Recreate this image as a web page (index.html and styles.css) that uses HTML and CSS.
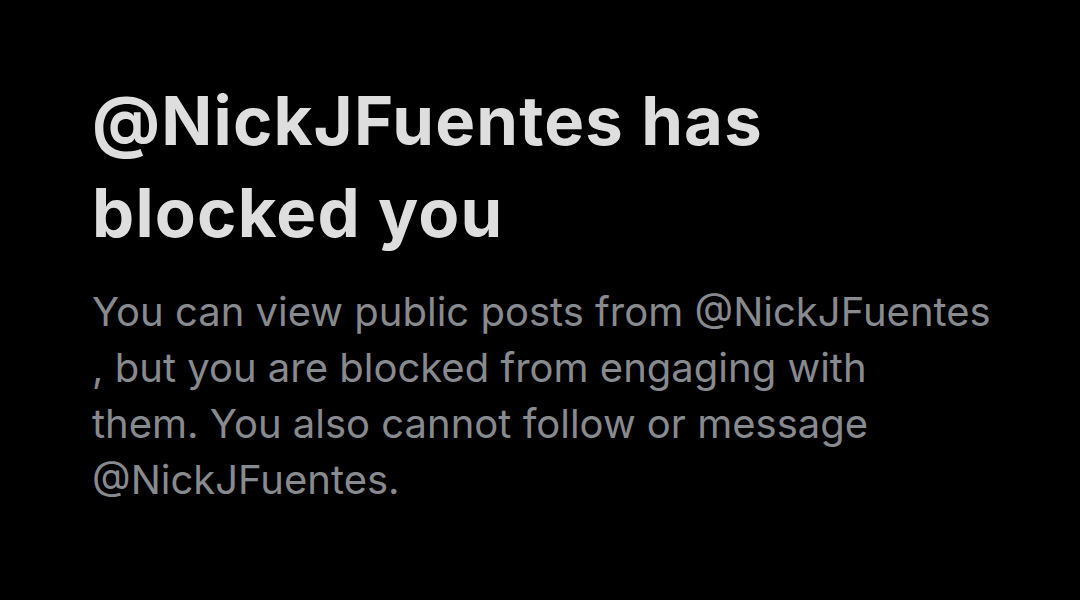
FILE: index.html
```html
<!DOCTYPE html>
<html lang="en">
<head>
    <meta charset="UTF-8">
    <meta name="viewport" content="width=device-width, initial-scale=1.0">
    <title>Blocked</title>
    <link rel="stylesheet" href="styles.css">
</head>
<body>
    <div class="container">
        <h1 class="title">@NickJFuentes has blocked you</h1>
        <p class="message">You can view public posts from <span class="mention">@NickJFuentes</span>, but you are blocked from engaging with<br>them. You also cannot follow or message <span class="mention">@NickJFuentes</span>.</p>
    </div>
</body>
</html>
```

FILE: styles.css
```css
body {
    margin: 0;
    padding: 0;
    background: #000;
    font-family: Inter, Roboto, "Liberation Sans", Arial, sans-serif;
    min-height: 100vh;
}

.container {
    padding: 75px 0 0 92px;
    width: 900px;
}

.title {
    margin: 0;
    font-size: 67px;
    line-height: 92px;
    font-weight: 700;
    color: #dedede;
    letter-spacing: 1.2px;
    width: 720px;
}

.message {
    margin: 25px 0 0;
    font-size: 40px;
    line-height: 56px;
    color: #878a8f;
}

.mention {
    display: inline-block;
}
```
